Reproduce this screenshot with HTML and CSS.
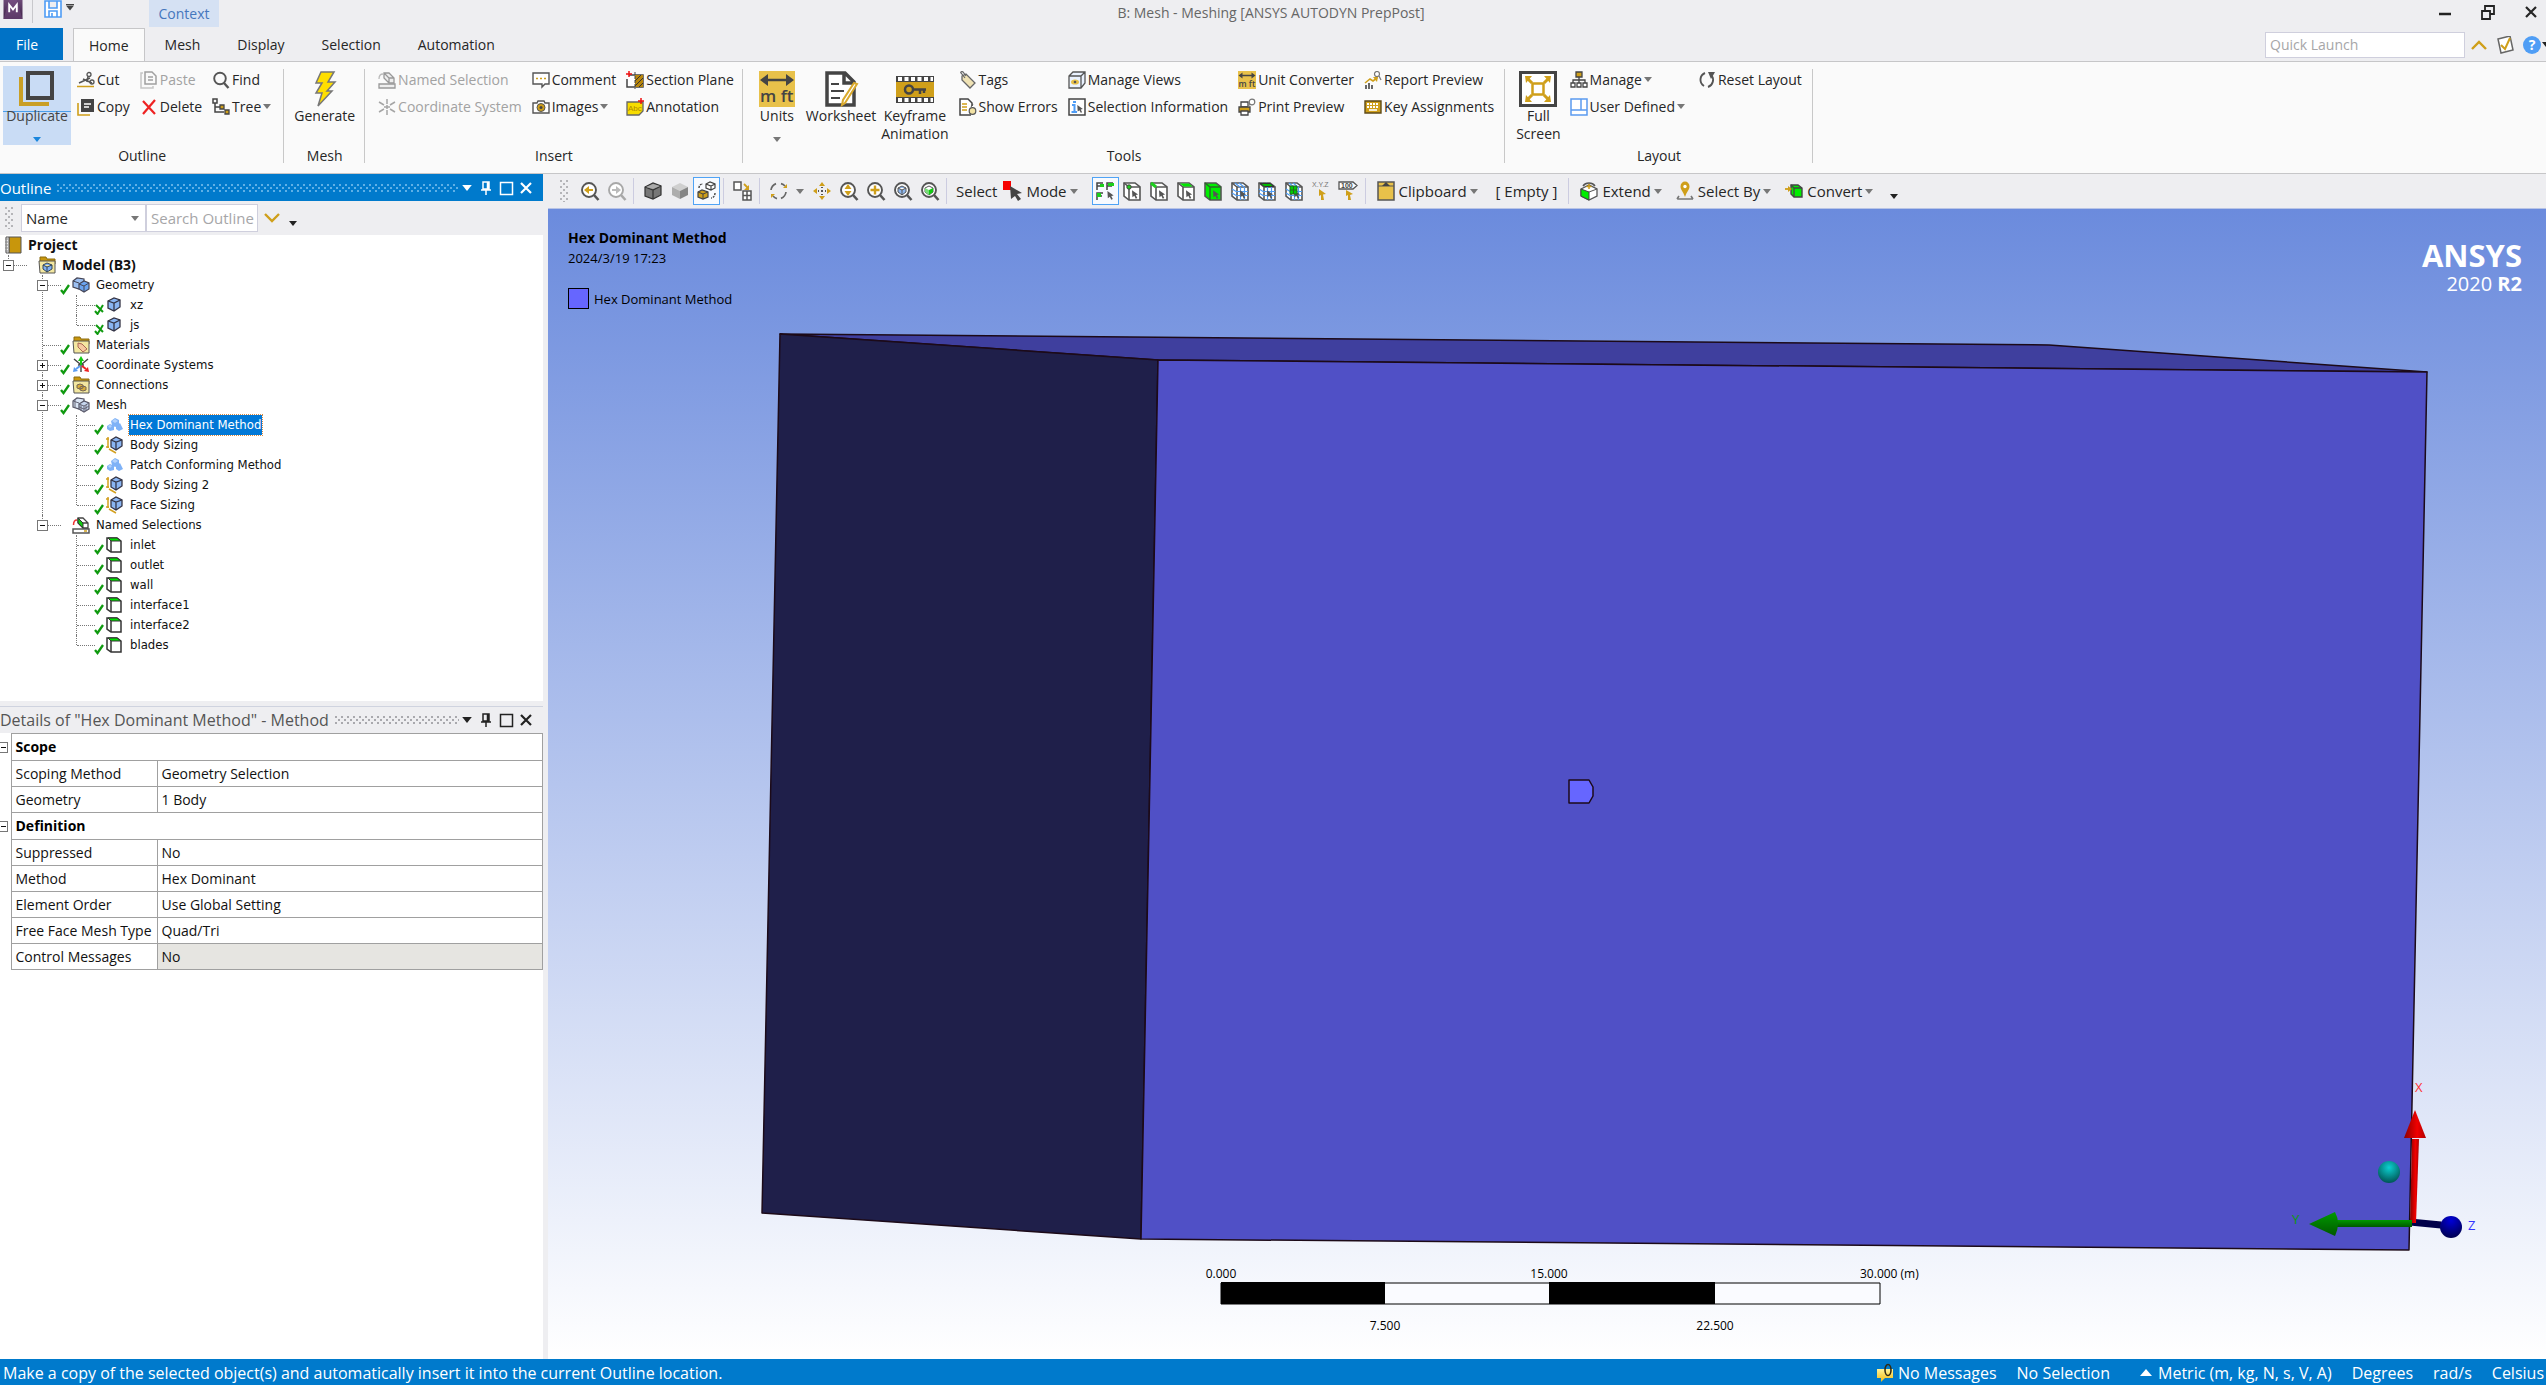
FILE: index.html
```html
<!DOCTYPE html>
<html lang="en">
<head>
<meta charset="utf-8">
<title>B: Mesh - Meshing [ANSYS AUTODYN PrepPost]</title>
<link rel="stylesheet" href="styles.css">
</head>
<body>
<svg class="defs" aria-hidden="true">
  <defs>
    <linearGradient id="g-leaf" x1="0" y1="0" x2="0" y2="1"><stop offset="0" stop-color="#fff59a"/><stop offset="1" stop-color="#f2b90c"/></linearGradient>
    <linearGradient id="g-plum" x1="0" y1="0" x2="0" y2="1"><stop offset="0" stop-color="#6d4a78"/><stop offset="1" stop-color="#3d2247"/></linearGradient>
  </defs>
  <symbol id="caret" viewBox="0 0 8 5"><path d="M0 0H8L4 5Z" fill="currentColor"/></symbol>
  <symbol id="cursor" viewBox="0 0 8 10"><path d="M0 0L7 5L4.300 5.600L6 9L4.300 9.800L2.700 6.500L0.500 8Z" fill="#555"/></symbol>
  <symbol id="pin" viewBox="0 0 16 18"><path d="M5 3H11V10H5ZM9.500 3V10M3 11H13M8 11V16" fill="none" stroke="currentColor" stroke-width="1.500"/></symbol>
  <symbol id="maxi" viewBox="0 0 16 18"><path d="M2.500 3.500H14.500V15.500H2.500Z" fill="none" stroke="currentColor" stroke-width="1.500"/></symbol>
  <symbol id="close" viewBox="0 0 16 18"><path d="M3 4L13 14M13 4L3 14" fill="none" stroke="currentColor" stroke-width="2.200"/></symbol>
  <symbol id="chev-down" viewBox="0 0 16 10"><path d="M1 1L8 8L15 1" fill="none" stroke="#cf9f1a" stroke-width="2.400"/></symbol>
  <symbol id="chev-up" viewBox="0 0 16 10"><path d="M1 9L8 2L15 9" fill="none" stroke="#cf9f1a" stroke-width="2.400"/></symbol>

  <symbol id="app" viewBox="0 0 20 20"><path d="M0 0H20V20H0Z" fill="url(#g-plum)"/><path d="M0 20L6 0H14L20 20Z" fill="#7b5188" opacity=".5"/><path d="M6 13V5L10 10L14 5V13" fill="none" stroke="#fff" stroke-width="2"/></symbol>
  <symbol id="save" viewBox="0 0 18 18"><path d="M1 1H17V17H1ZM5 1V8H13V1M5 17V11H13V17M8 13V17" fill="#fff" stroke="#4e9cf5" stroke-width="1.600"/></symbol>
  <symbol id="duplicate" viewBox="0 0 36 36"><path d="M2 6V33H30" fill="none" stroke="#c99f26" stroke-width="4"/><path d="M9 2H33V27H9Z" fill="none" stroke="#444" stroke-width="4"/></symbol>
  <symbol id="cut" viewBox="0 0 18 18"><path d="M0 15.500H17" stroke="#cf9f1a" stroke-width="1.500"/><path d="M2 12L13 7M6 8L15 12" stroke="#555" stroke-width="1.500" fill="none"/><circle cx="12" cy="3.500" r="2" fill="none" stroke="#555" stroke-width="1.300"/><circle cx="15" cy="11" r="2" fill="none" stroke="#555" stroke-width="1.300"/><path d="M11 5.500L10 11" stroke="#555" stroke-width="1.500"/></symbol>
  <symbol id="copy" viewBox="0 0 18 18"><path d="M1 5V17H13" fill="none" stroke="#cf9f1a" stroke-width="1.600"/><path d="M4 1H17V14H4Z" fill="#444"/><path d="M7 6H14M7 9H12" stroke="#fff" stroke-width="1.500"/></symbol>
  <symbol id="paste" viewBox="0 0 18 18"><path d="M3 2H1V17H13V15" fill="none" stroke="#c6c6c6" stroke-width="1.500"/><path d="M5 1H12L16 5V13H5ZM8 6H13M8 9H13" fill="none" stroke="#a0a0a0" stroke-width="1.500"/></symbol>
  <symbol id="delete" viewBox="0 0 18 18"><path d="M3 3L15 16M15 2L3 16" stroke="#ee2222" stroke-width="2.200" fill="none"/></symbol>
  <symbol id="find" viewBox="0 0 18 18"><circle cx="8" cy="7.500" r="5.800" fill="none" stroke="#555" stroke-width="1.900"/><path d="M12 12L16.500 17" stroke="#555" stroke-width="2.400"/></symbol>
  <symbol id="tree" viewBox="0 0 18 18"><path d="M1 1H5V5H1ZM3 5V14H12M3 9H8" fill="none" stroke="#444" stroke-width="1.500"/><path d="M8 7H12V11H8ZM13 12H17V16H13Z" fill="#cf9f1a" stroke="#444" stroke-width="1.300"/></symbol>
  <symbol id="bolt" viewBox="0 0 24 36"><path d="M8 1H21L15 11H22L14 20H19L5 35L9 22H3L9 12H3Z" fill="#ffdf00" stroke="#777" stroke-width="1.500"/></symbol>
  <symbol id="namedsel" viewBox="0 0 18 18"><path d="M1 13H17V17H1Z" fill="#eee" stroke="#999" stroke-width="1.300"/><path d="M6 2H11L16 7V12H11L6 7ZM6 2L11 7V12M11 7H16" fill="#eee" stroke="#999" stroke-width="1.300"/><path d="M1 8C1 4 3 3 5 3" fill="none" stroke="#bbb" stroke-width="1.300"/></symbol>
  <symbol id="namedsel-on" viewBox="0 0 18 18"><path d="M1 13H17V17H1Z" fill="#fff" stroke="#555" stroke-width="1.500"/><path d="M6 2H11L16 7V12H11L6 7ZM11 7H16" fill="#fff" stroke="#444" stroke-width="1.300"/><path d="M6 2L11 7V12L6 7Z" fill="#12c912" stroke="#333"/><path d="M1.500 9C1.500 5 3 4 5 4" fill="none" stroke="#ee3333" stroke-width="1.500"/><path d="M12 15H15" stroke="#cf9f1a" stroke-width="1.500"/></symbol>
  <symbol id="csys" viewBox="0 0 18 18"><path d="M9 1V6M9 12V17M1 4L6 7M12 7L17 4M1 14L6 11M12 11L17 14M9 7V11M6 9H12" fill="none" stroke="#a5a5a5" stroke-width="1.500"/></symbol>
  <symbol id="csys-on" viewBox="0 0 18 18"><path d="M2 3L8 8M16 3L10 8M9 10V16M6 9H12" stroke="#444" stroke-width="1.400"/><path d="M9 9V3" stroke="#16c916" stroke-width="2"/><path d="M6 5L9 0L12 5Z" fill="#16c916"/><path d="M8 10L4 13" stroke="#5b9bf0" stroke-width="2"/><path d="M1 16L2 11L6 15Z" fill="#5b9bf0"/><path d="M10 10L14 13" stroke="#e22" stroke-width="2"/><path d="M17 16L12 15L16 11Z" fill="#e22"/></symbol>
  <symbol id="comment" viewBox="0 0 18 18"><path d="M1 2H17V13H13L10 16V13H1Z" fill="#fff" stroke="#555" stroke-width="1.400"/><path d="M4 7.500H14" stroke="#cf9f1a" stroke-width="1.500" stroke-dasharray="2 2"/></symbol>
  <symbol id="camera" viewBox="0 0 18 18"><path d="M1 5H5L6 3H12L13 5H17V15H1Z" fill="#fff" stroke="#555" stroke-width="1.400"/><circle cx="9" cy="9.500" r="4" fill="#cf9f1a" stroke="#555"/><circle cx="9" cy="9.500" r="1.500" fill="#444"/></symbol>
  <symbol id="section" viewBox="0 0 18 18"><path d="M3 4H17V16H1V8" fill="#fff" stroke="#444" stroke-width="1.500"/><path d="M9 4H17V16H9Z" fill="#b8860b"/><path d="M9 10L15 4M9 15L17 7M13 16L17 12" stroke="#333"/><path d="M9 1V18" stroke="#444" stroke-dasharray="3 1"/><path d="M3 0V6M0 3H6" stroke="#e11" stroke-width="1.500"/></symbol>
  <symbol id="worksheet" viewBox="0 0 36 36"><path d="M4 2H22L31 11V34H4ZM21 2V12H31" fill="#fff" stroke="#444" stroke-width="3.500"/><path d="M8 13H16M8 20H21M8 27H17" stroke="#444" stroke-width="2"/><path d="M34 13L22 32L19 34L20 29L31 12Z" fill="#fff" stroke="#d9a92c" stroke-width="2"/></symbol>
  <symbol id="keyframe" viewBox="0 0 38 36"><path d="M0 5H38V32H0Z" fill="#444"/><path d="M0 11H38V26H0Z" fill="#cf9f1a"/><path d="M2 8H37M2 29H37" stroke="#fff" stroke-width="4" stroke-dasharray="4 2.500"/><circle cx="13" cy="18.500" r="4" fill="none" stroke="#444" stroke-width="2.500"/><path d="M17 18.500H30M24 18V23M28 18V22" stroke="#444" stroke-width="2.500"/></symbol>
  <symbol id="tags" viewBox="0 0 18 18"><path d="M3 5L7 3L16 12L11 17L3 9Z" fill="#efe2b4" stroke="#666" stroke-width="1.300"/><path d="M6 7L2 2C1 1 3 0 4 1L7 5" fill="none" stroke="#666" stroke-width="1.200"/></symbol>
  <symbol id="errors" viewBox="0 0 18 18"><path d="M12 17H1V1H9L13 5V8" fill="#fff" stroke="#444" stroke-width="1.500"/><path d="M3 6H8M3 9H8M3 12H8" stroke="#cf9f1a" stroke-width="1.500"/><circle cx="13.500" cy="13" r="3.300" fill="#f2e2a4" stroke="#555" stroke-width="1.200"/><path d="M12 9L14 6" stroke="#555"/></symbol>
  <symbol id="views" viewBox="0 0 18 18"><path d="M1 5L5 1H17V12L13 17H1ZM1 5H13V17M13 5L17 1" fill="#eaf2ff" stroke="#555" stroke-width="1.300"/><ellipse cx="7" cy="11" rx="4" ry="2.600" fill="#e8c14a"/><circle cx="7" cy="11" r="1.300" fill="#555"/></symbol>
  <symbol id="selinfo" viewBox="0 0 18 18"><path d="M1 1H17V17H1Z" fill="#fff" stroke="#444" stroke-width="1.500"/><path d="M4 7H6.500V14M3.500 14H9" stroke="#4e9cf5" stroke-width="2" fill="none"/><path d="M5 3H8V5H5Z" fill="#4e9cf5"/><use href="#cursor" x="9" y="7" width="7" height="8"/></symbol>
  <symbol id="printprev" viewBox="0 0 18 18"><path d="M3 4H10V9H3Z" fill="#fff" stroke="#444" stroke-width="1.300"/><path d="M1 9H12V14H1Z" fill="#cf9f1a" stroke="#444" stroke-width="1.300"/><path d="M3 13H10V17H3Z" fill="#fff" stroke="#444" stroke-width="1.300"/><circle cx="14" cy="4" r="2.800" fill="#fff" stroke="#777" stroke-width="1.200"/><path d="M12 6L10 9" stroke="#777"/></symbol>
  <symbol id="report" viewBox="0 0 18 18"><path d="M2 18V14M5 18V12M8 18V14" stroke="#444" stroke-width="1.600"/><path d="M1 12L6 8L9 10L13 7" stroke="#cf9f1a" stroke-width="1.600" fill="none"/><path d="M9 6L14 6L13 11Z" fill="#cf9f1a"/><circle cx="13" cy="3" r="2.500" fill="#fff" stroke="#777" stroke-width="1.200"/><path d="M15 5L17 9" stroke="#777" stroke-width="1.200"/></symbol>
  <symbol id="keys" viewBox="0 0 18 18"><path d="M1 3H17V15H1Z" fill="#cf9f1a" stroke="#5d4a18" stroke-width="1.400"/><path d="M3 6H15M3 9H15" stroke="#fff" stroke-width="1.800" stroke-dasharray="2 1"/><path d="M5 12H13" stroke="#fff" stroke-width="1.600"/></symbol>
  <symbol id="fullscreen" viewBox="0 0 38 36"><path d="M1.500 1.500H36.500V34.500H1.500Z" fill="#fff" stroke="#444" stroke-width="3"/><path d="M13.500 12.500H24.500V23.500H13.500Z" fill="none" stroke="#cf9f1a" stroke-width="2.500"/><path d="M13 12L8 7M25 12L30 7M13 24L8 29M25 24L30 29" stroke="#cf9f1a" stroke-width="3"/><path d="M6 5H13L7 12ZM32 5H25L31 12ZM6 31H13L7 24ZM32 31H25L31 24Z" fill="#cf9f1a"/></symbol>
  <symbol id="manage" viewBox="0 0 18 18"><path d="M6 1H12V6H6Z" fill="#cf9f1a" stroke="#444" stroke-width="1.300"/><path d="M9 6V13M3 13V9H15V13" fill="none" stroke="#444" stroke-width="1.300"/><path d="M1 12H5V16H1ZM7 12H11V16H7ZM13 12H17V16H13Z" fill="#fff" stroke="#444" stroke-width="1.300"/></symbol>
  <symbol id="userdef" viewBox="0 0 18 18"><path d="M1 1H17V17H1ZM1 12H17M11 1V12M6 12V12" fill="#fff" stroke="#5b9bf0" stroke-width="1.500"/></symbol>
  <symbol id="reset" viewBox="0 0 18 18"><path d="M7 2A7.300 7.300 0 0 0 6 15M10 16A7.300 7.300 0 0 0 13 4" fill="none" stroke="#555" stroke-width="1.900"/><path d="M10 1H17L13 8Z" fill="#555"/></symbol>

  <symbol id="z-glass" viewBox="0 0 20 20"><circle cx="9" cy="9" r="7" fill="#fff" stroke="currentColor" stroke-width="1.900"/><path d="M14 14L18.500 19" stroke="currentColor" stroke-width="2.600"/></symbol>
  <symbol id="z-back" viewBox="0 0 20 20"><use href="#z-glass"/><path d="M4 9L9 5V8H13V10H9V13Z" fill="#cf9f1a"/></symbol>
  <symbol id="z-fwd" viewBox="0 0 20 20"><use href="#z-glass"/><path d="M14 9L9 5V8H5V10H9V13Z" fill="#bbb"/></symbol>
  <symbol id="z-updown" viewBox="0 0 20 20"><use href="#z-glass"/><path d="M9 3L12.500 8H5.500ZM9 15L5.500 10H12.500Z" fill="#cf9f1a"/></symbol>
  <symbol id="z-plus" viewBox="0 0 20 20"><use href="#z-glass"/><path d="M9 4.500V13.500M4.500 9H13.500" stroke="#cf9f1a" stroke-width="2.400"/></symbol>
  <symbol id="z-fit" viewBox="0 0 20 20"><use href="#z-glass"/><path d="M5 7L9 5L13 7V11L9 14L5 11ZM5 7L9 9L13 7M9 9V14" fill="#8fb8ee" stroke="#555"/></symbol>
  <symbol id="z-green" viewBox="0 0 20 20"><use href="#z-glass"/><path d="M5 7L9 5L13 7V11L9 14L5 11Z" fill="#fff" stroke="#555"/><path d="M9 9L13 7V11L9 14Z" fill="#1c1"/><path d="M5 7L9 9V14L5 11Z" fill="#7d7"/></symbol>
  <symbol id="cube-edge" viewBox="0 0 18 18"><path d="M1 5L9 1L17 4V13L9 17L1 14Z" fill="#777" stroke="#333" stroke-width="1.200"/><path d="M1 5L9 8L17 4M9 8V17" fill="none" stroke="#333" stroke-width="1.200"/><path d="M2 5L9 2L16 4L9 7Z" fill="#aaa"/></symbol>
  <symbol id="cube-plain" viewBox="0 0 18 18"><path d="M1 5L9 1L17 5L9 9Z" fill="#cfcfcf"/><path d="M1 5L9 9V17L1 13Z" fill="#adadad"/><path d="M17 5L9 9V17L17 13Z" fill="#858585"/></symbol>
  <symbol id="cube-swap" viewBox="0 0 20 20"><path d="M9 3L13 1L18 3V7L14 9L9 7ZM9 3L14 5L18 3M14 5V9" fill="#fff" stroke="#444" stroke-width="1.200"/><path d="M1 11L5 9L11 11V16L6 18L1 16Z" fill="#cf9f1a" stroke="#444" stroke-width="1.200"/><path d="M1 11L6 13L11 11M6 13V18" fill="none" stroke="#444"/><path d="M2 7C2 4 4 3 6 3M18 12C18 15 16 17 14 17" stroke="#444" fill="none" stroke-width="1.400" stroke-dasharray="2 1"/></symbol>
  <symbol id="box-grid" viewBox="0 0 20 20"><path d="M1 1H8V9H1ZM10 10H18V19H10ZM14 10V19M10 14.500H18" fill="#fff" stroke="#555" stroke-width="1.500"/><path d="M11 3L15 7" stroke="#cf9f1a" stroke-width="1.800"/><path d="M16 4V9H11Z" fill="#cf9f1a"/></symbol>
  <symbol id="rotate" viewBox="0 0 20 20"><path d="M2 9A8 8 0 0 1 7 2.600M12 2.600A8 8 0 0 1 16 5M17 11A8 8 0 0 1 12 17.400M8 17.600A8 8 0 0 1 4 15" fill="none" stroke="#666" stroke-width="1.700"/><path d="M14 7H18V3ZM6 13H2V17Z" fill="#cf9f1a"/></symbol>
  <symbol id="pan" viewBox="0 0 20 20"><path d="M10 1L13 5H7ZM10 19L7 15H13ZM1 10L5 7V13ZM19 10L15 13V7Z" fill="#cf9f1a"/><path d="M9 9H11V11H9ZM9 6H11V7H9ZM9 13H11V14H9ZM6 9H7V11H6ZM13 9H14V11H13Z" fill="#555"/></symbol>
  <symbol id="mode" viewBox="0 0 20 20"><path d="M0 0H8V9H0Z" fill="#f60000"/><path d="M7 5L19 12L14 13L18 18L15 20L12 15L8 18Z" fill="#444"/></symbol>
  <symbol id="multi" viewBox="0 0 20 20"><path d="M2 9V2H8M2 5H7M12 9V2H18M12 5H17M2 19V12H8M2 15H7" fill="none" stroke="#444" stroke-width="1.500"/><path d="M5 3H9V6H5ZM13 2H19V5H13ZM2 12H6V16H2Z" fill="#1ccf1c"/><use href="#cursor" x="12" y="10" width="8" height="9"/></symbol>
  <symbol id="sb" viewBox="0 0 20 20"><path d="M2 2H13L18 6V19H7L2 15Z" fill="#fff" stroke="#555" stroke-width="1.600"/><path d="M2 2L7 6H18M7 6V19" fill="none" stroke="#555" stroke-width="1.600"/></symbol>
  <symbol id="sb-vertex" viewBox="0 0 20 20"><use href="#sb"/><circle cx="7" cy="6" r="2.200" fill="#1ccf1c" stroke="#444"/><use href="#cursor" x="10" y="9" width="7" height="9"/></symbol>
  <symbol id="sb-edge" viewBox="0 0 20 20"><use href="#sb"/><path d="M2 2L7 6" stroke="#1ccf1c" stroke-width="3"/><use href="#cursor" x="10" y="9" width="7" height="9"/></symbol>
  <symbol id="sb-face" viewBox="0 0 20 20"><use href="#sb"/><path d="M4 2.500H13L16.500 5.500H7.500Z" fill="#00e800"/><use href="#cursor" x="10" y="9" width="7" height="9"/></symbol>
  <symbol id="sb-body" viewBox="0 0 20 20"><path d="M2 2H13L18 6V19H7L2 15Z" fill="#00f000" stroke="#555" stroke-width="1.600"/><path d="M2 2L7 6H18M7 6V19" fill="none" stroke="#2a6a2a" stroke-width="1.400"/><use href="#cursor" x="10" y="9" width="7" height="9"/></symbol>
  <symbol id="sb-mesh" viewBox="0 0 20 20"><use href="#sb"/><path d="M10.500 6V19M14.500 6V19M7 10.500H18M7 14.500H18M2 8L7 11M2 12L7 15M5 2L10 6M9 2L14 6" stroke="#4e9cf5" stroke-width="1.200"/><use href="#cursor" x="10" y="9" width="7" height="9"/></symbol>
  <symbol id="sb-meshface" viewBox="0 0 20 20"><use href="#sb-mesh"/><path d="M3 2.500H13L17 5.500H7.500Z" fill="#0b0" stroke="#333"/></symbol>
  <symbol id="sb-meshel" viewBox="0 0 20 20"><use href="#sb-mesh"/><path d="M6 5H13V13H6Z" fill="#0c0" stroke="#262"/><path d="M9.500 5V13M6 9H13" stroke="#262"/></symbol>
  <symbol id="clip" viewBox="0 0 18 20"><path d="M1 1H17V19H1Z" fill="#e8c14a" stroke="#555" stroke-width="1.500"/><path d="M1 5H17" stroke="#555"/><path d="M5 5L9 1L13 5Z" fill="#444"/></symbol>
  <symbol id="extend" viewBox="0 0 18 20"><path d="M1 8L9 4L17 8V15L9 19L1 15Z" fill="#fff" stroke="#555" stroke-width="1.300"/><path d="M1 8L9 11V19L1 15Z" fill="#0e0" stroke="#444"/><path d="M9 11L17 8" stroke="#555"/><path d="M3 5A7 6 0 0 1 15 5" fill="none" stroke="#555" stroke-width="1.500"/><path d="M9 3V8M6.500 5.500H11.500" stroke="#cf9f1a" stroke-width="1.500"/></symbol>
  <symbol id="mappin" viewBox="0 0 18 20"><path d="M1 18H17M1 18L3 15M17 18L15 15" stroke="#777" stroke-width="1.600" fill="none"/><path d="M9 16C7 10 4.500 9 4.500 5.500A4.500 5 0 0 1 13.500 5.500C13.500 9 11 10 9 16Z" fill="#cf9f1a"/><circle cx="9" cy="5.500" r="1.700" fill="#fff"/></symbol>
  <symbol id="convert" viewBox="0 0 18 20"><path d="M6 4H13L17 7V16H9L6 13Z" fill="#0e0" stroke="#444" stroke-width="1.400"/><path d="M6 4L9 7H17M9 7V16" fill="none" stroke="#444" stroke-width="1.300"/><path d="M0 8H5" stroke="#cf9f1a" stroke-width="1.800"/><path d="M3 5L7 8L3 11Z" fill="#cf9f1a"/></symbol>
  <symbol id="note" viewBox="0 0 18 18"><path d="M2 3L14 0L17 14L5 17Z" fill="#fff" stroke="#666" stroke-width="1.500"/><path d="M5 9L9 13L14 2" fill="none" stroke="#cf9f1a" stroke-width="2"/></symbol>

  <symbol id="t-project" viewBox="0 0 18 18"><path d="M5 1H17V17H5Z" fill="#c8960c" stroke="#555"/><path d="M2 1H5V17H2Z" fill="#eee" stroke="#555"/><path d="M1 3H4M1 6H4M1 9H4M1 12H4M1 15H4" stroke="#888"/></symbol>
  <symbol id="t-folder" viewBox="0 0 18 18"><path d="M2 1H8L9 3H17V8H2Z" fill="#c8960c" stroke="#8a6a10"/><path d="M1 5H17V17H2Z" fill="#f3e7a0" stroke="#555"/></symbol>
  <symbol id="t-model" viewBox="0 0 18 18"><use href="#t-folder"/><path d="M5 9L9 7L14 9V13L9 16L5 13ZM5 9L9 11L14 9M9 11V16" fill="#7fb0f5" stroke="#345"/></symbol>
  <symbol id="t-mat" viewBox="0 0 18 18"><use href="#t-folder"/><path d="M6 7L10 8L15 13L11 16L6 11Z" fill="#f5c9a0" stroke="#a65"/></symbol>
  <symbol id="t-conn" viewBox="0 0 18 18"><use href="#t-folder"/><path d="M5 9L8 8L11 9V12L8 13L5 12ZM8 11L11 10L14 11V14L11 15L8 14Z" fill="#d8ad3c" stroke="#765"/></symbol>
  <symbol id="t-geom" viewBox="0 0 18 18"><path d="M1 5L5 2L12 3V10L7 13L1 11Z" fill="#9cc0f2" stroke="#445" stroke-width="1.200"/><path d="M7 8L12 5L17 7V13L12 16L7 13Z" fill="#6ba4f0" stroke="#445" stroke-width="1.200"/><path d="M7 8L12 10L17 7M12 10V16M1 5L7 7" stroke="#445" fill="none"/></symbol>
  <symbol id="t-mesh" viewBox="0 0 18 18"><path d="M1 5L5 2L12 3V10L7 13L1 11Z" fill="#dbe6f5" stroke="#556" stroke-width="1.200"/><path d="M7 8L12 5L17 7V13L12 16L7 13Z" fill="#c6d6ee" stroke="#556" stroke-width="1.200"/><path d="M7 8L12 10L17 7M12 10V16M1 5L7 7M3 4V12M9 9V15M14 9V15M7 11L12 13L17 10" stroke="#667" fill="none"/></symbol>
  <symbol id="t-body" viewBox="0 0 18 18"><path d="M2 5L8 2L14 4V11L8 15L2 12Z" fill="#8ab5f2" stroke="#334" stroke-width="1.300"/><path d="M2 5L8 7L14 4M8 7V15" fill="none" stroke="#334" stroke-width="1.300"/></symbol>
  <symbol id="t-method" viewBox="0 0 18 18"><path d="M1 10L4 8L8 10V14L4 15L1 13ZM5 5L9 2L13 4V9L9 11L6 9ZM10 10L14 7L17 13L13 15L10 13Z" fill="#7fb2f7"/><path d="M6 5L9 3L12 5L9 7ZM2 10L4 9L6 10L4 12Z" fill="#b4d2fb"/></symbol>
  <symbol id="t-size" viewBox="0 0 18 18"><path d="M5 4L10 1L16 4V10L10 14L5 11Z" fill="#8ab5f2" stroke="#334" stroke-width="1.300"/><path d="M5 4L10 6L16 4M10 6V14" fill="none" stroke="#334" stroke-width="1.300"/><path d="M2 1V12M0 3H3M0 11H3M3 13L10 17" stroke="#d3a020" stroke-width="1.500" fill="none"/></symbol>
  <symbol id="t-box" viewBox="0 0 18 18"><path d="M1 2H11L15 5V16H5L1 13Z" fill="#fff" stroke="#333" stroke-width="1.500"/><path d="M2 2H11L15 5H5Z" fill="#00e000" stroke="#333"/><path d="M5 5V16" stroke="#333" stroke-width="1.500"/></symbol>
  <symbol id="tick" viewBox="0 0 10 12"><path d="M1 7L3.500 10L9 2" fill="none" stroke="#109a10" stroke-width="2.300"/></symbol>
  <symbol id="tickx" viewBox="0 0 10 12"><path d="M1 8L3.500 11L9 2M2 2L9 9" fill="none" stroke="#109a10" stroke-width="2"/></symbol>
  <symbol id="msg" viewBox="0 0 20 20"><path d="M1 6H17V15H9L5 19V15H1Z" fill="url(#g-leaf)"/><ellipse cx="12" cy="7" rx="3" ry="5.500" fill="none" stroke="#332b10" stroke-width="1.600"/></symbol>
</svg>

<header class="titlebar">
  <svg class="app-icon"><use href="#app"/></svg>
  <button class="bare save" aria-label="Save"><svg class="i18"><use href="#save"/></svg></button>
  <button class="bare quick-more" aria-label="Customize"><svg class="caret"><use href="#caret"/></svg></button>
  <div class="context-tab">Context</div>
  <h1 class="window-title">B: Mesh - Meshing [ANSYS AUTODYN PrepPost]</h1>
  <div class="window-buttons">
    <button class="bare" aria-label="Minimize"><svg class="i18" viewBox="0 0 18 18"><path d="M3 11H15" stroke="#222" stroke-width="2.500"/></svg></button>
    <button class="bare" aria-label="Restore"><svg class="i18" viewBox="0 0 18 18"><path d="M6 7V3H15V11H11M3 8H11V16H3Z" fill="none" stroke="#222" stroke-width="1.800"/></svg></button>
    <button class="bare" aria-label="Close"><svg class="i18"><use href="#close"/></svg></button>
  </div>
</header>

<nav class="tabs">
  <button class="tab tab-file">File</button>
  <button class="tab tab-active">Home</button>
  <button class="tab">Mesh</button>
  <button class="tab">Display</button>
  <button class="tab">Selection</button>
  <button class="tab">Automation</button>
  <div class="tabs-right">
    <input class="quick-launch" type="text" placeholder="Quick Launch" aria-label="Quick Launch">
    <button class="bare" aria-label="Collapse ribbon"><svg class="chev"><use href="#chev-up"/></svg></button>
    <button class="bare" aria-label="Options"><svg class="i18"><use href="#note"/></svg></button>
    <button class="bare help" aria-label="Help"><span class="help-dot">?</span><svg class="caret"><use href="#caret"/></svg></button>
  </div>
</nav>

<section class="ribbon">
  <div class="group">
    <div class="group-body g-outline">
      <button class="big big-dup"><svg class="i36"><use href="#duplicate"/></svg><span class="big-label">Duplicate</span><svg class="caret"><use href="#caret"/></svg></button>
      <div class="col">
        <button class="cmd"><svg class="i18"><use href="#cut"/></svg>Cut</button>
        <button class="cmd"><svg class="i18"><use href="#copy"/></svg>Copy</button>
      </div>
      <div class="col">
        <button class="cmd" disabled><svg class="i18"><use href="#paste"/></svg>Paste</button>
        <button class="cmd"><svg class="i18"><use href="#delete"/></svg>Delete</button>
      </div>
      <div class="col">
        <button class="cmd"><svg class="i18"><use href="#find"/></svg>Find</button>
        <button class="cmd"><svg class="i18"><use href="#tree"/></svg>Tree<svg class="caret"><use href="#caret"/></svg></button>
      </div>
    </div>
    <div class="group-label">Outline</div>
  </div>
  <div class="group">
    <div class="group-body g-mesh">
      <button class="big"><svg class="i36"><use href="#bolt"/></svg><span class="big-label">Generate</span></button>
    </div>
    <div class="group-label">Mesh</div>
  </div>
  <div class="group">
    <div class="group-body g-insert">
      <div class="col">
        <button class="cmd" disabled><svg class="i18"><use href="#namedsel"/></svg>Named Selection</button>
        <button class="cmd" disabled><svg class="i18"><use href="#csys"/></svg>Coordinate System</button>
      </div>
      <div class="col">
        <button class="cmd"><svg class="i18"><use href="#comment"/></svg>Comment</button>
        <button class="cmd"><svg class="i18"><use href="#camera"/></svg>Images<svg class="caret"><use href="#caret"/></svg></button>
      </div>
      <div class="col">
        <button class="cmd"><svg class="i18"><use href="#section"/></svg>Section Plane</button>
        <button class="cmd"><svg class="i18" viewBox="0 0 18 18"><path d="M1 4H17V13L13 17H1Z" fill="#f7dc00" stroke="#666" stroke-width="1.300"/><text class="ico-abc" x="2" y="13">Abc</text><path d="M15 0V6M12 3H18" stroke="#e11" stroke-width="1.500"/></svg>Annotation</button>
      </div>
    </div>
    <div class="group-label">Insert</div>
  </div>
  <div class="group">
    <div class="group-body g-tools">
      <button class="big"><svg class="i36" viewBox="0 0 36 36"><path d="M0 0H36V36H0Z" fill="#e8c14a"/><path d="M5 9H31" stroke="#444" stroke-width="2.500"/><path d="M1 9L9 3V15ZM35 9L27 3V15Z" fill="#444"/><text class="ico-mft" x="1" y="31">m ft</text></svg><span class="big-label">Units</span><svg class="caret"><use href="#caret"/></svg></button>
      <button class="big"><svg class="i36"><use href="#worksheet"/></svg><span class="big-label">Worksheet</span></button>
      <button class="big big-last"><svg class="i36"><use href="#keyframe"/></svg><span class="big-label">Keyframe<br>Animation</span></button>
      <div class="col">
        <button class="cmd"><svg class="i18"><use href="#tags"/></svg>Tags</button>
        <button class="cmd"><svg class="i18"><use href="#errors"/></svg>Show Errors</button>
      </div>
      <div class="col">
        <button class="cmd"><svg class="i18"><use href="#views"/></svg>Manage Views</button>
        <button class="cmd"><svg class="i18"><use href="#selinfo"/></svg>Selection Information</button>
      </div>
      <div class="col">
        <button class="cmd"><svg class="i18" viewBox="0 0 36 36"><path d="M0 0H36V36H0Z" fill="#e8c14a"/><path d="M5 9H31" stroke="#444" stroke-width="3"/><path d="M1 9L9 3V15ZM35 9L27 3V15Z" fill="#444"/><text class="ico-mft" x="1" y="31">m ft</text></svg>Unit Converter</button>
        <button class="cmd"><svg class="i18"><use href="#printprev"/></svg>Print Preview</button>
      </div>
      <div class="col">
        <button class="cmd"><svg class="i18"><use href="#report"/></svg>Report Preview</button>
        <button class="cmd"><svg class="i18"><use href="#keys"/></svg>Key Assignments</button>
      </div>
    </div>
    <div class="group-label">Tools</div>
  </div>
  <div class="group">
    <div class="group-body g-layout">
      <button class="big"><svg class="i36"><use href="#fullscreen"/></svg><span class="big-label">Full<br>Screen</span></button>
      <div class="col">
        <button class="cmd"><svg class="i18"><use href="#manage"/></svg>Manage<svg class="caret"><use href="#caret"/></svg></button>
        <button class="cmd"><svg class="i18"><use href="#userdef"/></svg>User Defined<svg class="caret"><use href="#caret"/></svg></button>
      </div>
      <div class="col">
        <button class="cmd"><svg class="i18"><use href="#reset"/></svg>Reset Layout</button>
      </div>
    </div>
    <div class="group-label">Layout</div>
  </div>
</section>

<main class="work">
  <aside class="side">
    <section class="panel panel-outline">
      <header class="panel-head panel-head-active">
        <h2>Outline</h2><span class="dots"></span>
        <button class="bare" aria-label="Menu"><svg class="caret caret-lg"><use href="#caret"/></svg></button>
        <button class="bare" aria-label="Pin"><svg class="i16"><use href="#pin"/></svg></button>
        <button class="bare" aria-label="Maximize"><svg class="i16"><use href="#maxi"/></svg></button>
        <button class="bare" aria-label="Close"><svg class="i16"><use href="#close"/></svg></button>
      </header>
      <div class="filter">
        <span class="grip"></span>
        <span class="select-wrap">
          <select class="filter-field" aria-label="Filter by"><option>Name</option></select>
          <svg class="caret"><use href="#caret"/></svg>
        </span>
        <input class="filter-search" type="text" placeholder="Search Outline" aria-label="Search Outline">
        <button class="bare" aria-label="Expand"><svg class="chev"><use href="#chev-down"/></svg></button>
        <button class="bare low" aria-label="More"><svg class="caret"><use href="#caret"/></svg></button>
      </div>
      <div class="tree">
        <div class="row row-root"><svg class="i18"><use href="#t-project"/></svg><b>Project</b></div>
        <ul>
          <li><div class="row"><button class="exp" aria-label="Collapse"></button><span class="st"></span><svg class="i18"><use href="#t-model"/></svg><b>Model (B3)</b></div>
            <ul>
              <li><div class="row"><button class="exp" aria-label="Collapse"></button><svg class="st"><use href="#tick"/></svg><svg class="i18"><use href="#t-geom"/></svg><span>Geometry</span></div>
                <ul>
                  <li><div class="row"><svg class="st"><use href="#tickx"/></svg><svg class="i18"><use href="#t-body"/></svg><span>xz</span></div></li>
                  <li><div class="row"><svg class="st"><use href="#tickx"/></svg><svg class="i18"><use href="#t-body"/></svg><span>js</span></div></li>
                </ul>
              </li>
              <li><div class="row"><svg class="st"><use href="#tick"/></svg><svg class="i18"><use href="#t-mat"/></svg><span>Materials</span></div></li>
              <li><div class="row"><button class="exp exp-plus" aria-label="Expand"></button><svg class="st"><use href="#tick"/></svg><svg class="i18"><use href="#csys-on"/></svg><span>Coordinate Systems</span></div></li>
              <li><div class="row"><button class="exp exp-plus" aria-label="Expand"></button><svg class="st"><use href="#tick"/></svg><svg class="i18"><use href="#t-conn"/></svg><span>Connections</span></div></li>
              <li><div class="row"><button class="exp" aria-label="Collapse"></button><svg class="st"><use href="#tick"/></svg><svg class="i18"><use href="#t-mesh"/></svg><span>Mesh</span></div>
                <ul>
                  <li><div class="row"><svg class="st"><use href="#tick"/></svg><svg class="i18"><use href="#t-method"/></svg><span class="picked">Hex Dominant Method</span></div></li>
                  <li><div class="row"><svg class="st"><use href="#tick"/></svg><svg class="i18"><use href="#t-size"/></svg><span>Body Sizing</span></div></li>
                  <li><div class="row"><svg class="st"><use href="#tick"/></svg><svg class="i18"><use href="#t-method"/></svg><span>Patch Conforming Method</span></div></li>
                  <li><div class="row"><svg class="st"><use href="#tick"/></svg><svg class="i18"><use href="#t-size"/></svg><span>Body Sizing 2</span></div></li>
                  <li><div class="row"><svg class="st"><use href="#tick"/></svg><svg class="i18"><use href="#t-size"/></svg><span>Face Sizing</span></div></li>
                </ul>
              </li>
              <li><div class="row"><button class="exp" aria-label="Collapse"></button><span class="st"></span><svg class="i18"><use href="#namedsel-on"/></svg><span>Named Selections</span></div>
                <ul>
                  <li><div class="row"><svg class="st"><use href="#tick"/></svg><svg class="i18"><use href="#t-box"/></svg><span>inlet</span></div></li>
                  <li><div class="row"><svg class="st"><use href="#tick"/></svg><svg class="i18"><use href="#t-box"/></svg><span>outlet</span></div></li>
                  <li><div class="row"><svg class="st"><use href="#tick"/></svg><svg class="i18"><use href="#t-box"/></svg><span>wall</span></div></li>
                  <li><div class="row"><svg class="st"><use href="#tick"/></svg><svg class="i18"><use href="#t-box"/></svg><span>interface1</span></div></li>
                  <li><div class="row"><svg class="st"><use href="#tick"/></svg><svg class="i18"><use href="#t-box"/></svg><span>interface2</span></div></li>
                  <li><div class="row"><svg class="st"><use href="#tick"/></svg><svg class="i18"><use href="#t-box"/></svg><span>blades</span></div></li>
                </ul>
              </li>
            </ul>
          </li>
        </ul>
      </div>
    </section>

    <section class="panel panel-details">
      <header class="panel-head">
        <h2>Details of "Hex Dominant Method" - Method</h2><span class="dots"></span>
        <button class="bare" aria-label="Menu"><svg class="caret caret-lg"><use href="#caret"/></svg></button>
        <button class="bare" aria-label="Pin"><svg class="i16"><use href="#pin"/></svg></button>
        <button class="bare" aria-label="Maximize"><svg class="i16"><use href="#maxi"/></svg></button>
        <button class="bare" aria-label="Close"><svg class="i16"><use href="#close"/></svg></button>
      </header>
      <table class="props">
        <colgroup><col class="c-gutter"><col class="c-name"><col></colgroup>
        <tbody>
          <tr class="sec"><td class="gutter"><button class="exp exp-cut" aria-label="Collapse"></button></td><th colspan="2">Scope</th></tr>
          <tr><td class="gutter"></td><td>Scoping Method</td><td>Geometry Selection</td></tr>
          <tr><td class="gutter"></td><td>Geometry</td><td>1 Body</td></tr>
          <tr class="sec"><td class="gutter"><button class="exp exp-cut" aria-label="Collapse"></button></td><th colspan="2">Definition</th></tr>
          <tr><td class="gutter"></td><td>Suppressed</td><td>No</td></tr>
          <tr><td class="gutter"></td><td>Method</td><td>Hex Dominant</td></tr>
          <tr><td class="gutter"></td><td>Element Order</td><td>Use Global Setting</td></tr>
          <tr><td class="gutter"></td><td>Free Face Mesh Type</td><td>Quad/Tri</td></tr>
          <tr><td class="gutter"></td><td>Control Messages</td><td class="locked">No</td></tr>
        </tbody>
      </table>
    </section>
  </aside>

  <section class="stage">
    <div class="toolbar">
      <span class="grip"></span>
      <button class="tb" aria-label="Previous view"><svg class="i20 dark"><use href="#z-back"/></svg></button>
      <button class="tb" aria-label="Next view"><svg class="i20 pale"><use href="#z-fwd"/></svg></button>
      <span class="sep"></span>
      <button class="tb" aria-label="Shaded with edges"><svg class="i18"><use href="#cube-edge"/></svg></button>
      <button class="tb" aria-label="Shaded"><svg class="i18"><use href="#cube-plain"/></svg></button>
      <button class="tb tb-on" aria-label="Display style"><svg class="i20"><use href="#cube-swap"/></svg></button>
      <span class="sep"></span>
      <button class="tb" aria-label="Viewports"><svg class="i20"><use href="#box-grid"/></svg></button>
      <span class="sep"></span>
      <button class="tb" aria-label="Rotate"><svg class="i20"><use href="#rotate"/></svg></button>
      <button class="tb tb-caret" aria-label="Rotate options"><svg class="caret"><use href="#caret"/></svg></button>
      <button class="tb" aria-label="Pan"><svg class="i20"><use href="#pan"/></svg></button>
      <button class="tb" aria-label="Zoom"><svg class="i20 dark"><use href="#z-updown"/></svg></button>
      <button class="tb" aria-label="Box zoom"><svg class="i20 dark"><use href="#z-plus"/></svg></button>
      <button class="tb" aria-label="Zoom to fit"><svg class="i20 dark"><use href="#z-fit"/></svg></button>
      <button class="tb" aria-label="Zoom to selection"><svg class="i20 dark"><use href="#z-green"/></svg></button>
      <span class="sep"></span>
      <span class="tb-text">Select</span>
      <button class="tbl tbl-mode"><svg class="i20"><use href="#mode"/></svg>Mode<svg class="caret"><use href="#caret"/></svg></button>
      <button class="tb tb-on" aria-label="Smart select"><svg class="i20"><use href="#multi"/></svg></button>
      <button class="tb" aria-label="Vertex"><svg class="i20"><use href="#sb-vertex"/></svg></button>
      <button class="tb" aria-label="Edge"><svg class="i20"><use href="#sb-edge"/></svg></button>
      <button class="tb" aria-label="Face"><svg class="i20"><use href="#sb-face"/></svg></button>
      <button class="tb" aria-label="Body"><svg class="i20"><use href="#sb-body"/></svg></button>
      <button class="tb" aria-label="Node"><svg class="i20"><use href="#sb-mesh"/></svg></button>
      <button class="tb" aria-label="Element face"><svg class="i20"><use href="#sb-meshface"/></svg></button>
      <button class="tb" aria-label="Element"><svg class="i20"><use href="#sb-meshel"/></svg></button>
      <button class="tb" aria-label="Coordinates"><svg class="i20" viewBox="0 0 20 20"><text class="ico-xyz" x="1" y="6">X.Y.Z</text><path d="M8 8L15 13L12 13.500L13 19L10 19L10 14L8 15Z" fill="#cf9f1a"/></svg></button>
      <button class="tb" aria-label="Label"><svg class="i20" viewBox="0 0 20 20"><path d="M1 1H15L19 4.500L15 8H1Z" fill="#fff" stroke="#555" stroke-width="1.300"/><text class="ico-100" x="3" y="7">100</text><path d="M8 9L15 13L12 14L13 19L10 19L10 14L8 15Z" fill="#cf9f1a"/></svg></button>
      <span class="sep"></span>
      <button class="tbl"><svg class="i20"><use href="#clip"/></svg>Clipboard<svg class="caret"><use href="#caret"/></svg></button>
      <span class="tb-text tb-empty">[ Empty ]</span>
      <span class="sep"></span>
      <button class="tbl"><svg class="i20"><use href="#extend"/></svg>Extend<svg class="caret"><use href="#caret"/></svg></button>
      <button class="tbl"><svg class="i20"><use href="#mappin"/></svg>Select By<svg class="caret"><use href="#caret"/></svg></button>
      <button class="tbl"><svg class="i20"><use href="#convert"/></svg>Convert<svg class="caret"><use href="#caret"/></svg></button>
      <button class="bare low" aria-label="More"><svg class="caret"><use href="#caret"/></svg></button>
    </div>

    <div class="viewport">
      <svg class="scene" viewBox="0 0 1998 1150" role="img" aria-label="Meshed body">
        <defs>
          <radialGradient id="s-cyan" cx=".5" cy=".3" r=".7"><stop offset="0" stop-color="#0cd0d0"/><stop offset="1" stop-color="#055"/></radialGradient>
          <radialGradient id="s-blue" cx=".5" cy=".2" r=".8"><stop offset="0" stop-color="#0000d8"/><stop offset="1" stop-color="#000050"/></radialGradient>
          <linearGradient id="s-red" x1="0" x2="1" y1="0" y2="0"><stop offset="0" stop-color="#8c0000"/><stop offset=".6" stop-color="#f00000"/><stop offset="1" stop-color="#b00000"/></linearGradient>
          <linearGradient id="s-green" x1="0" x2="0" y1="0" y2="1"><stop offset="0" stop-color="#009a00"/><stop offset="1" stop-color="#005800"/></linearGradient>
        </defs>
        <g stroke="#1c0a18" stroke-width="1.500" stroke-linejoin="round">
          <path d="M232 125L1501 136L1879 163L610 151Z" fill="#3f3f9e"/>
          <path d="M232 125L610 151L593 1030L214 1004Z" fill="#1f1f4a"/>
          <path d="M610 151L1879 163L1861 1041L593 1030Z" fill="#5050c6"/>
          <path d="M1021 571H1041L1045 578V587L1041 594H1021Z" fill="#6666ff"/>
        </g>
        <path d="M673 1074H1332V1095H673Z" fill="#fafbff" stroke="#000"/>
        <path d="M673 1073H837V1095H673ZM1001 1073H1167V1095H1001Z"/>
        <g class="scale-text">
          <text x="673" y="1069" text-anchor="middle">0.000</text>
          <text x="1001" y="1069" text-anchor="middle">15.000</text>
          <text x="1312" y="1069">30.000 (m)</text>
          <text x="837" y="1121" text-anchor="middle">7.500</text>
          <text x="1167" y="1121" text-anchor="middle">22.500</text>
        </g>
        <g>
          <path d="M1862 1013L1893 1016" stroke="#00004a" stroke-width="7"/>
          <circle cx="1903" cy="1018" r="11" fill="url(#s-blue)"/>
          <path d="M1864 930H1871L1868 1014H1862Z" fill="url(#s-red)"/>
          <path d="M1867 901L1878 929H1856Z" fill="url(#s-red)"/>
          <path d="M1788 1011H1864V1018H1788Z" fill="url(#s-green)"/>
          <path d="M1761 1015L1787 1003Q1793 1014 1787 1027Z" fill="url(#s-green)"/>
          <circle cx="1841" cy="963" r="11" fill="url(#s-cyan)"/>
          <text class="axis axis-x" x="1867" y="883">X</text>
          <text class="axis axis-y" x="1744" y="1015">Y</text>
          <text class="axis axis-z" x="1920" y="1021">Z</text>
        </g>
      </svg>
      <div class="caption">
        <strong>Hex Dominant Method</strong>
        <span>2024/3/19 17:23</span>
        <div class="legend"><i class="swatch"></i>Hex Dominant Method</div>
      </div>
      <div class="brand"><span class="brand-name">ANSYS</span><span class="brand-rel">2020 <b>R2</b></span></div>
    </div>
  </section>
</main>

<footer class="status">
  <span class="status-hint">Make a copy of the selected object(s) and automatically insert it into the current Outline location.</span>
  <span class="status-msg"><svg class="i20"><use href="#msg"/></svg>No Messages</span>
  <span class="status-sel">No Selection</span>
  <span class="status-unit"><svg class="up" viewBox="0 0 12 8"><path d="M0 7L6 0L12 7Z" fill="#fff"/></svg>Metric (m, kg, N, s, V, A)</span>
  <span>Degrees</span>
  <span>rad/s</span>
  <span>Celsius</span>
</footer>
</body>
</html>
```

FILE: styles.css
```css
* { box-sizing: border-box; }

html, body { height: 100%; }

body {
  margin: 0;
  display: flex;
  flex-direction: column;
  background: #eeeef1;
  color: #262626;
  font: 14px/20px "Open Sans", "Noto Sans", sans-serif;
  overflow: hidden;
}

h1, h2, ul { margin: 0; padding: 0; font: inherit; list-style: none; }

button, input, select { font: inherit; color: inherit; margin: 0; }

button {
  border: 0;
  padding: 0;
  background: none;
  white-space: nowrap;
}

svg { display: block; flex: none; }

.defs { position: absolute; width: 0; height: 0; }
.bare { display: flex; align-items: center; justify-content: center; }
.i16 { width: 16px; height: 18px; }
.i18 { width: 18px; height: 18px; }
.i20 { width: 20px; height: 20px; }
.i36 { width: 38px; height: 36px; }
.caret { width: 8px; height: 5px; color: #777; }
.caret-lg { width: 10px; height: 6px; color: inherit; }
.chev { width: 16px; height: 10px; }
.dark { color: #555; }
.pale { color: #a8a8a8; }

/* lettering inside icons */
.ico-abc { font: 8px "Liberation Sans", sans-serif; fill: #b08a00; }
.ico-mft { font: 600 17px "Open Sans", sans-serif; fill: #444; }
.ico-xyz { font: 7px "Liberation Sans", sans-serif; fill: #777; }
.ico-100 { font: 700 7px "Liberation Sans", sans-serif; fill: #444; }

/* title bar */
.titlebar {
  display: grid;
  grid-template-columns: 32px 34px 83px 70px 1fr 219px;
  flex: 0 0 28px;
  align-items: start;
}
.app-icon { width: 20px; height: 19px; margin-left: 3px; }
.save { border-left: 1px solid #c8c8cc; padding-left: 7px; height: 23px; align-items: flex-start; }
.quick-more { justify-content: flex-start; height: 15px; }
.quick-more .caret { color: #444; border-top: 1px solid #444; height: 7px; }
.context-tab {
  height: 27px;
  background: #d5e1f3;
  color: #4577bd;
  line-height: 27px;
  text-align: center;
}
.window-title { color: #666; line-height: 26px; text-align: center; padding-right: 4px; }
.window-buttons { display: flex; justify-content: flex-end; gap: 25px; padding: 3px 6px 0 0; }

/* tabs */
.tabs { display: flex; flex: 0 0 33px; border-bottom: 1px solid #c6c6c8; }
.tab { height: 33px; padding: 0 16px; margin-right: 5px; line-height: 33px; }
.tab-file { background: #0072c6; color: #fff; width: 63px; margin-right: 10px; height: 32px; text-align: left; }
.tab-active { background: #fafafa; border: 1px solid #c6c6c8; border-bottom: 0; line-height: 31px; padding: 0 15px; margin-right: 4px; }
.tabs-right { display: flex; align-items: center; gap: 9px; margin-left: auto; }
.quick-launch {
  width: 200px;
  height: 26px;
  border: 1px solid #cfcfdd;
  background: #fff;
  padding: 0 4px;
  margin-right: -3px;
}
.quick-launch::placeholder, .filter-search::placeholder { color: #a6a6a8; opacity: 1; }
.help { gap: 1px; width: 23px; justify-content: flex-start; overflow: hidden; }
.help .caret { color: #222; }
.help-dot {
  flex: none;
  width: 18px;
  height: 18px;
  border-radius: 50%;
  background: #4f9df5;
  color: #fff;
  font-weight: 700;
  line-height: 18px;
}

/* ribbon */
.ribbon {
  display: flex;
  flex: 0 0 112px;
  background: #fafafa;
  border-bottom: 1px solid #c6c6c8;
  padding-top: 4px;
}
.group { display: flex; flex-direction: column; position: relative; }
.group::after {
  content: "";
  position: absolute;
  top: 3px;
  right: 0;
  width: 1px;
  height: 94px;
  background: #c8c8c8;
}
.group-body { display: flex; height: 79px; gap: 10px; padding: 0 11px; }
.g-outline { padding: 0 7px 0 3px; }
.g-mesh { padding: 0 10px; }
.g-insert { padding: 0 9px 0 13px; }
.g-tools { padding-left: 10px; }
.group-label { line-height: 22px; text-align: center; }
.col { display: flex; flex-direction: column; align-items: flex-start; }
.cmd { display: flex; align-items: center; gap: 2px; height: 27px; }
.cmd .caret { margin-right: 6px; }
.g-layout .cmd .caret { margin-right: 3px; }
.cmd:disabled { color: #a2a2a2; }
.big { display: flex; flex-direction: column; align-items: center; padding-top: 5px; line-height: 18px; }
.g-tools .big { min-width: 48px; margin-right: -5px; }
.g-tools .big-last { margin-right: 0; }
.g-layout .big { margin-right: -1px; }
.big .caret { margin-top: 12px; }
.big-dup {
  width: 68px;
  margin-right: -4px;
  background: linear-gradient(#4a9eea, #4a9eea) 0 45px / 100% 1px no-repeat #c9dcf5;
  color: #444;
}
.big-dup .caret { color: #1a86dc; }

/* work area */
.work { display: flex; flex: 1 1 0; min-height: 0; }
.side { display: flex; flex-direction: column; gap: 5px; flex: 0 0 543px; margin-right: 5px; }
.panel { display: flex; flex-direction: column; background: #fff; overflow: hidden; min-height: 0; }
.panel-outline { flex: 527 1 0; }
.panel-details { flex: 652 1 0; }
.panel-head {
  display: flex;
  align-items: center;
  gap: 9px;
  flex: 0 0 27px;
  padding-right: 9px;
  background: #eeeef1;
  border-top: 1px solid #cfd3df;
  color: #222;
  font-size: 16px;
}
.panel-head h2 { color: #555; white-space: nowrap; }
.panel-head-active { background: #007acc; border: 0; color: #fff; font-size: 15px; }
.panel-head-active h2 { color: #fff; }
.panel-head .bare + .bare { margin-right: -5px; }
.panel-head .dots + .bare { margin-right: -3px; }
.panel-head .bare:last-child { margin-right: 0; }
.dots {
  flex: 1;
  height: 8px;
  margin: 0 -6px 0 -3px;
  background-image: radial-gradient(circle at 1px 1px, #a9a9ae 1px, transparent 1px), radial-gradient(circle at 1px 1px, #a9a9ae 1px, transparent 1px);
  background-size: 6px 6px;
  background-position: 0 0, 3px 3px;
}
.panel-head-active .dots {
  background-image: radial-gradient(circle at 1px 1px, #5fb0e6 1px, transparent 1px), radial-gradient(circle at 1px 1px, #5fb0e6 1px, transparent 1px);
}
.grip {
  width: 8px;
  height: 22px;
  flex: none;
  background-image: radial-gradient(circle at 1px 1px, #b4b4b8 1px, transparent 1px), radial-gradient(circle at 1px 1px, #b4b4b8 1px, transparent 1px);
  background-size: 6px 6px;
  background-position: 0 0, 3px 3px;
}
.filter { display: flex; align-items: center; flex: 0 0 34px; padding-left: 5px; background: #eeeef1; font-size: 15px; }
.select-wrap { display: grid; grid-template-columns: 1fr 14px; align-items: center; width: 125px; height: 28px; margin-left: 8px; background: #fff; border: 1px solid #cfcfdd; }
.filter-field { appearance: none; grid-area: 1 / 1 / 2 / 3; border: 0; background: none; padding: 0 4px; height: 26px; }
.select-wrap .caret { grid-area: 1 / 2; }
.filter-search { width: 112px; height: 28px; border: 1px solid #cfcfdd; background: #fff; padding: 0 0 0 4px; margin-right: 6px; }
.low { align-self: flex-end; margin: 0 0 9px 9px; }
.low .caret { color: #222; }

/* outline tree */
.tree { font: 13px/20px "DejaVu Sans Condensed", "Open Sans", sans-serif; color: #111; overflow: hidden; }
.tree b { font-family: "Open Sans", sans-serif; font-size: 14px; }
.tree ul ul { padding-left: 34px; }
.tree li { position: relative; }
.tree li::before {
  content: "";
  position: absolute;
  left: 8px;
  top: 0;
  bottom: 0;
  border-left: 1px dotted #777;
}
.tree li:last-child::before { bottom: auto; height: 10px; }
.row { position: relative; display: flex; align-items: center; height: 20px; padding-left: 26px; white-space: nowrap; }
.row::before {
  content: "";
  position: absolute;
  left: 9px;
  top: 10px;
  width: 18px;
  border-top: 1px dotted #777;
}
.row .i18 { margin: 0 6px 0 2px; }
.row-root { padding-left: 2px; }
.row-root::before { display: none; }

/* expander box: a bar, with an upright added when collapsed */
.exp {
  position: absolute;
  left: 3px;
  top: 5px;
  width: 11px;
  height: 11px;
  border: 1px solid #777;
  background: linear-gradient(#111, #111) center / 5px 1px no-repeat #fff;
}
.exp-plus {
  background: linear-gradient(#111, #111) center / 5px 1px no-repeat, linear-gradient(#111, #111) center / 1px 5px no-repeat #fff;
}
.st { width: 10px; height: 12px; align-self: flex-end; }
.picked { background: #0078d7; color: #fff; outline: 1px dotted #d98a40; padding: 0 1px; margin-left: -1px; }

/* details table */
.props { border-collapse: collapse; table-layout: fixed; width: 100%; font-size: 14px; line-height: 20px; color: #111; }
.c-gutter { width: 11px; }
.c-name { width: 146px; }
.props tr { height: 26px; }
.props .sec { height: 27px; }
.props td, .props th { border: 1px solid #a0a0a0; padding: 0 4px; text-align: left; white-space: nowrap; }
.props .gutter { border: 0; padding: 0; }
.props th { color: #000; font-weight: 700; }
.exp-cut { position: static; display: block; width: 8px; height: 11px; border-left: 0; }
.props .locked { background: #e6e5e1; }

/* graphics toolbar */
.stage { display: flex; flex-direction: column; flex: 1 1 0; min-width: 0; }
.toolbar { display: flex; align-items: center; flex: 0 0 34px; padding-left: 12px; font-size: 15px; }
.toolbar .grip { margin-right: 8px; }
.tb { display: flex; align-items: center; justify-content: center; width: 27px; height: 28px; border: 1px solid transparent; }
.tb-on { border-color: #4fa3f5; background: #f7faff; }
.tb-caret { width: 16px; }
.sep { width: 1px; height: 26px; background: #cccce0; margin: 0 5px 0 3px; }
.tb-text { margin: 0 5px 0 4px; }
.tb-empty { margin: 0 8px 0 10px; }
.tbl { display: flex; align-items: center; gap: 3px; height: 28px; margin: 0 8px 0 5px; }
.tbl-mode { margin: 0 14px 0 1px; }

/* viewport */
.viewport { position: relative; flex: 1 1 0; min-height: 0; background: linear-gradient(#6b8bdd, #fff); border-top: 1px solid #b8c4e6; }
.scene { position: absolute; inset: 0; width: 100%; height: 100%; }
.scale-text { font: 12px "Open Sans", sans-serif; fill: #000; }
.axis { font: 13px "Open Sans", sans-serif; }
.axis-x { fill: #f33; }
.axis-y { fill: #0a9a0a; }
.axis-z { fill: #33f; }
.caption { position: absolute; left: 20px; top: 19px; display: flex; flex-direction: column; color: #000; font-size: 13px; }
.caption strong { font-size: 14px; }
.legend { display: flex; align-items: center; gap: 5px; margin-top: 20px; }
.swatch { width: 21px; height: 21px; border: 1px solid #000; background: #66f; }
.brand { position: absolute; right: 24px; top: 29px; display: flex; flex-direction: column; align-items: flex-end; color: #fff; }
.brand-name { font-size: 31px; font-weight: 700; line-height: 34px; }
.brand-rel { font-size: 20px; line-height: 24px; }

/* status bar */
.status { display: flex; align-items: center; gap: 20px; flex: 0 0 26px; padding: 2px 2px 0 3px; background: #007acc; color: #fff; font-size: 16px; white-space: nowrap; }
.status-hint { margin-right: auto; }
.status-msg, .status-unit { display: flex; align-items: center; gap: 2px; }
.status-sel { margin-right: 10px; }
.up { width: 12px; height: 8px; margin-right: 4px; }
```
